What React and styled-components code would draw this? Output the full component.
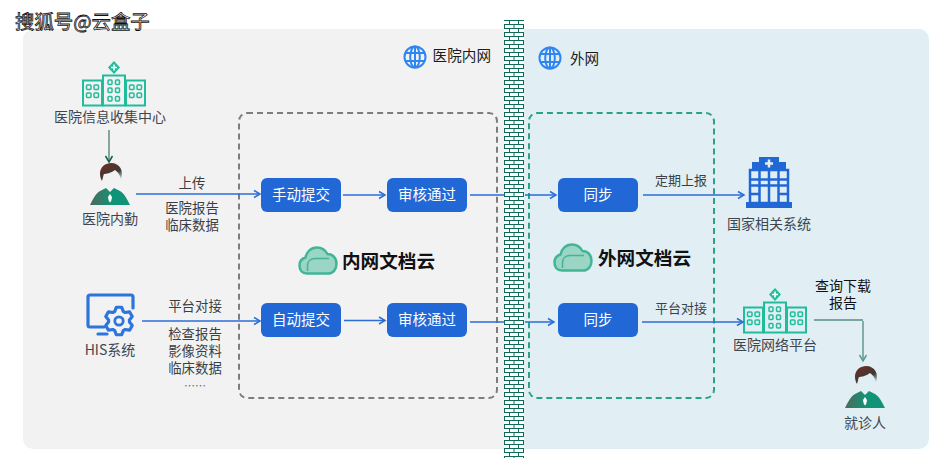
import React from "react";
import styled, { createGlobalStyle } from "styled-components";

const Global = createGlobalStyle`
  * { box-sizing: border-box; }
  html, body {
    margin: 0;
    padding: 0;
    background: #fff;
    font-family: "Noto Sans CJK SC", "Noto Sans", sans-serif;
  }
`;

const Page = styled.div`
  position: relative;
  width: 952px;
  height: 473px;
  overflow: hidden;
  padding: 29px 23px 24px;
`;

const Watermark = styled.div`
  position: absolute;
  left: 15px;
  top: 8px;
  font-size: 19.4px;
  line-height: 26px;
  color: #fff;
  -webkit-text-stroke: 0.8px #111;
  z-index: 3;
`;

const Links = styled.svg`
  position: absolute;
  inset: 0;
  width: 952px;
  height: 473px;
  pointer-events: none;
`;

const Board = styled.div`
  display: flex;
  height: 420px;
`;

const InnerZone = styled.section`
  display: flex;
  width: 481px;
  background: #f2f2f2;
  border-radius: 10px 0 0 10px;
`;

const OuterZone = styled.section`
  display: flex;
  width: 405px;
  background: #e1eff5;
  border-radius: 0 10px 10px 0;
`;

const Wall = styled.svg`
  flex: none;
  width: 20px;
  height: 438px;
  margin-top: -9px;
  z-index: 2;
`;

const Sources = styled.div`
  width: 215px;
  padding: 32px 0 0 31px;
`;

const SourceRow = styled.div`
  display: flex;
  margin-top: ${(p) => p.$top || 0}px;
`;

const NodeStack = styled.div`
  display: flex;
  flex-direction: column;
  align-items: center;
  flex: none;
  width: ${(p) => p.$w}px;
  margin-top: ${(p) => p.$top || 0}px;
  padding-bottom: ${(p) => p.$pad || 0}px;
`;

const IconNudge = styled.div`
  margin-left: ${(p) => p.$x}px;
`;

const Caption = styled.div`
  font-size: 14px;
  line-height: 17px;
  color: #3f4650;
  white-space: nowrap;
  margin-top: ${(p) => p.$top || 0}px;
`;

const Notes = styled.div`
  display: flex;
  flex-direction: column;
  align-items: center;
  width: ${(p) => p.$w}px;
  gap: ${(p) => p.$gap}px;
  padding-top: ${(p) => p.$pad || 0}px;
  align-self: ${(p) => p.$align};
`;

const Note = styled.div`
  font-size: 13.4px;
  line-height: 17px;
  color: #3a3f47;
  text-align: center;
  white-space: nowrap;
`;

const Dots = styled.span`
  color: #666;
  font-size: 11px;
`;

const MainColumn = styled.div`
  display: flex;
  flex-direction: column;
  flex: none;
  width: ${(p) => p.$w}px;
  padding-left: ${(p) => p.$inset || 0}px;
`;

const ZoneHeader = styled.header`
  display: flex;
  align-items: center;
  justify-content: ${(p) => p.$justify};
  gap: ${(p) => p.$gap}px;
  height: 24px;
  margin: ${(p) => p.$top}px 0 ${(p) => 59 - p.$top}px;
  padding: 0 13px 0 10px;
`;

const ZoneName = styled.span`
  font-size: 14.6px;
  line-height: 20px;
  color: #1c1c1c;
  padding-bottom: ${(p) => p.$pad}px;
`;

const DashBox = styled.div`
  display: flex;
  flex-direction: column;
  width: ${(p) => p.$w}px;
  height: 287px;
  padding: 64px 0 0 ${(p) => p.$pad}px;
  border: 2px dashed ${(p) => p.$color};
  border-radius: 9px;
`;

const StepRow = styled.div`
  display: flex;
  gap: ${(p) => p.$gap || 0}px;
`;

const StepButton = styled.div`
  display: flex;
  align-items: center;
  justify-content: center;
  flex: none;
  width: 80px;
  height: 34px;
  padding-bottom: 3px;
  background: #2168d6;
  border-radius: 6px;
  color: #fff;
  font-size: 14.5px;
`;

const EdgeNote = styled(Note)`
  font-size: 13px;
  margin: ${(p) => -p.$lift}px 0 0 17px;
`;

const CloudRow = styled.div`
  display: flex;
  align-items: center;
  gap: ${(p) => p.$gap}px;
  height: 29px;
  margin: ${(p) => p.$top}px 0 ${(p) => 62 - p.$top}px ${(p) => p.$shift}px;
`;

const CloudTitle = styled.span`
  font-size: 18.6px;
  line-height: 24px;
  font-weight: 700;
  color: #111;
  padding-bottom: 2px;
  white-space: nowrap;
`;

const Targets = styled.div`
  display: flex;
  flex-direction: column;
  flex: 1;
  padding-top: 128px;
`;

const LowerTargets = styled.div`
  display: flex;
  margin-top: 45px;
  padding-left: 15px;
`;

const PatientColumn = styled.div`
  display: flex;
  flex-direction: column;
  width: 90px;
  margin-left: -5px;
`;

const Query = styled.div`
  width: 56px;
  font-size: 14px;
  line-height: 17px;
  color: #111;
  text-align: center;
  white-space: nowrap;
`;

const Patient = styled(NodeStack)`
  align-self: flex-start;
  margin-left: 29px;
`;

const Icon = styled.svg`
  display: block;
  flex: none;
`;

const TEAL = "#1fbd9c";

const Hospital = () => (
  <Icon width="64" height="46" viewBox="0 0 64 46" fill="none" stroke={TEAL} strokeWidth="2">
    <path d="M32 0l6 6.500-6 6.500-6-6.500z" fill={TEAL} stroke="none" />
    <path d="M32 3.500v6M29 6.500h6" stroke="#fff" strokeWidth="1.600" />
    <rect x="1" y="19.500" width="19" height="25" />
    <rect x="44" y="19.500" width="19" height="25" />
    <rect x="21" y="14.500" width="22" height="30" />
    <g strokeWidth="1.500">
      {[4.500, 12, 47.500, 55].flatMap((bx) =>
        [24, 32].map((by) => <rect key={`${bx}-${by}`} x={bx} y={by} width="4.500" height="4.500" rx="1" />)
      )}
      {[26, 33.500].flatMap((bx) =>
        [19, 27, 35.500].map((by) => <rect key={`${bx}-${by}`} x={bx} y={by} width="4" height="4.500" rx="1" />)
      )}
    </g>
  </Icon>
);

const Person = ({ id }) => (
  <Icon width="42" height="43" viewBox="0 0 42 43">
    <defs>
      <linearGradient id={id} x1="0" y1="0" x2="0.6" y2="1">
        <stop offset="0" stopColor="#742b22" />
        <stop offset="0.7" stopColor="#3f3a34" />
        <stop offset="1" stopColor="#a9bab5" />
      </linearGradient>
      <linearGradient id={`${id}b`} x1="0" y1="0" x2="1" y2="0">
        <stop offset="0" stopColor="#4f6a5c" />
        <stop offset="0.55" stopColor="#119377" />
      </linearGradient>
    </defs>
    <path d="M13 18C9 10 11 1 22 0c9 0 13 8 10 16-1-4-3-7-6-9-4 3-9 4-11 4-1 2-1 4-2 7z" fill={`url(#${id})`} />
    <path d="M1 42c3-6 6-12 10-14l6-3 4 4 4-4 6 3c4 2 7 8 10 14z" fill={`url(#${id}b)`} />
    <path d="M21 31l2 3-.8 4-1.200 1.500L19.800 38 19 34z" fill="#fff" />
  </Icon>
);

const Globe = () => (
  <Icon width="24" height="24" viewBox="0 0 24 24" fill="none" stroke="#2f86f2" strokeWidth="2">
    <circle cx="12" cy="12" r="10.500" />
    <ellipse cx="12" cy="12" rx="4.800" ry="10.500" />
    <path d="M12 1.500v21M2.500 8h19M2.500 16h19" />
  </Icon>
);

const Cloud = () => (
  <Icon width="40" height="29" viewBox="0 0 40 29">
    <path
      d="M9 27.500C4 27.500 1.500 24 1.500 19.500 1.500 15.500 4 12.500 7.500 11.500 8.500 6 13 1.500 19 1.500c5 0 8.500 3 10.500 6.500 5 0 9 3.500 9 10 0 5.500-3.500 9.500-8.500 9.500z"
      fill="#9ad6c3"
      stroke="#42b597"
      strokeWidth="2.500"
    />
    <path d="M9.500 25v-5c0-4.500 3-7.500 7.500-7.500h14" fill="none" stroke="#42b597" strokeWidth="1.500" />
  </Icon>
);

const gearPath = (cx, cy, outer, inner, teeth = 6) => {
  const pt = (r, deg) => {
    const a = (deg * Math.PI) / 180;
    return `${(cx + r * Math.cos(a)).toFixed(2)} ${(cy + r * Math.sin(a)).toFixed(2)}`;
  };
  const pts = [];
  for (let i = 0; i < teeth; i++) {
    const a = (i * 360) / teeth - 90;
    pts.push(pt(inner, a - 24), pt(outer, a - 11), pt(outer, a + 11), pt(inner, a + 24));
  }
  return `M${pts.join("L")}z`;
};

const Desk = () => (
  <Icon width="50" height="44" viewBox="0 0 50 44" fill="none" stroke="#2c75dc" strokeLinecap="round">
    <path d="M19 34H5a2 2 0 0 1-2-2V4a2 2 0 0 1 2-2h41a2 2 0 0 1 2 2v11" strokeWidth="3.200" />
    <path d="M13 41h9" strokeWidth="3.200" />
    <path d={gearPath(34, 28, 14, 10.500)} strokeWidth="3.200" strokeLinejoin="round" />
    <circle cx="34" cy="28" r="4.200" strokeWidth="2.800" />
  </Icon>
);

const BLUE = "#2168d6";

const Tower = () => (
  <Icon width="46" height="51" viewBox="0 0 46 51" fill="none" stroke={BLUE} strokeWidth="2.500">
    <path d="M13 0h20v5h7v8H6V5h7z" fill={BLUE} stroke="none" />
    <path d="M23 2.500v8M19 6.500h8" stroke="#e1eff5" strokeWidth="2.500" />
    <rect x="4" y="13" width="38" height="33" />
    <path d="M4 22.500h38M4 28.500h38M4 37h9M33 37h9M13.500 13v33M23 13v33M32.500 13v33" />
    <path d="M0 48h46" strokeWidth="6" />
  </Icon>
);

const Link = ({ d, tip, color = "#2b6cd8", width = 1.5, dir = 0 }) => (
  <g fill="none" stroke={color} strokeWidth={width}>
    <path d={d} />
    <path d="M-6 -3.500 L0 0 L-6 3.500" strokeWidth="1.500" transform={`translate(${tip[0]} ${tip[1]}) rotate(${dir})`} />
  </g>
);

const BrickWall = () => (
  <Wall viewBox="0 0 20 438">
    <defs>
      <pattern id="bricks" width="20" height="8" patternUnits="userSpaceOnUse">
        <rect width="20" height="8" fill="#fff" />
        <path d="M0 .5h20M0 4.500h20M5.500 0v4M14.500 0v4M.5 4v4M10 4v4M19.500 4v4" stroke="#0f6a58" fill="none" />
      </pattern>
    </defs>
    <rect width="20" height="438" fill="url(#bricks)" />
  </Wall>
);

export default function App() {
  return (
    <Page>
      <Global />
      <Watermark>搜狐号@云盒子</Watermark>
      <Board>
        <InnerZone>
          <Sources>
            <SourceRow>
              <NodeStack $w={112} $pad={6}>
                <IconNudge $x={8}>
                  <Hospital />
                </IconNudge>
                <Caption $top={1}>医院信息收集中心</Caption>
                <NodeStack $w={42} $top={38}>
                  <Person id="staff" />
                </NodeStack>
                <Caption $top={4}>医院内勤</Caption>
              </NodeStack>
              <Notes $w={52} $gap={8} $align="flex-end">
                <Note>上传</Note>
                <Note>
                  医院报告
                  <br />
                  临床数据
                </Note>
              </Notes>
            </SourceRow>
            <SourceRow $top={60}>
              <NodeStack $w={112}>
                <Desk />
                <Caption $top={4}>HIS系统</Caption>
              </NodeStack>
              <Notes $w={58} $gap={11} $pad={4} $align="flex-start">
                <Note>平台对接</Note>
                <Note>
                  检查报告
                  <br />
                  影像资料
                  <br />
                  临床数据
                  <br />
                  <Dots>……</Dots>
                </Note>
              </Notes>
            </SourceRow>
          </Sources>

          <MainColumn $w={266}>
            <ZoneHeader $justify="flex-end" $gap={6} $top={16}>
              <Globe />
              <ZoneName $pad={4}>医院内网</ZoneName>
            </ZoneHeader>
            <DashBox $w={260} $pad={21} $color="#7d7d7d">
              <StepRow $gap={46}>
                <StepButton>手动提交</StepButton>
                <StepButton>审核通过</StepButton>
              </StepRow>
              <CloudRow $gap={4} $top={34} $shift={37}>
                <Cloud />
                <CloudTitle>内网文档云</CloudTitle>
              </CloudRow>
              <StepRow $gap={46}>
                <StepButton>自动提交</StepButton>
                <StepButton>审核通过</StepButton>
              </StepRow>
            </DashBox>
          </MainColumn>
        </InnerZone>

        <BrickWall />

        <OuterZone>
          <MainColumn $w={191} $inset={4}>
            <ZoneHeader $justify="flex-start" $gap={8} $top={17}>
              <Globe />
              <ZoneName $pad={0}>外网</ZoneName>
            </ZoneHeader>
            <DashBox $w={187} $pad={28} $color="#2aa288">
              <StepRow>
                <StepButton>同步</StepButton>
                <EdgeNote $lift={7}>定期上报</EdgeNote>
              </StepRow>
              <CloudRow $gap={5} $top={31} $shift={-5}>
                <Cloud />
                <CloudTitle>外网文档云</CloudTitle>
              </CloudRow>
              <StepRow>
                <StepButton>同步</StepButton>
                <EdgeNote $lift={4}>平台对接</EdgeNote>
              </StepRow>
            </DashBox>
          </MainColumn>

          <Targets>
            <NodeStack $w={108}>
              <Tower />
              <Caption $top={7}>国家相关系统</Caption>
            </NodeStack>
            <LowerTargets>
              <NodeStack $w={90} $top={11}>
                <Hospital />
                <Caption $top={2}>医院网络平台</Caption>
              </NodeStack>
              <PatientColumn>
                <Query>
                  查询下载
                  <br />
                  报告
                </Query>
                <Patient $w={42} $top={55}>
                  <Person id="patient" />
                  <Caption $top={5}>就诊人</Caption>
                </Patient>
              </PatientColumn>
            </LowerTargets>
          </Targets>
        </OuterZone>
      </Board>

      <Links viewBox="0 0 952 473">
        <Link d="M109 130V162" tip={[109, 162]} color="#135e4e" width={1} dir={90} />
        <Link d="M136 194H260" tip={[260, 194]} />
        <Link d="M343 195H385" tip={[385, 195]} />
        <Link d="M470 195H504M525 195H556" tip={[556, 195]} />
        <Link d="M643 195H744" tip={[744, 195]} />
        <Link d="M142 321H260" tip={[260, 321]} />
        <Link d="M344 320.500H385" tip={[385, 320.5]} />
        <Link d="M470 322H504M525 322H554" tip={[554, 322]} />
        <Link d="M642 322H743" tip={[743, 322]} />
        <path d="M814 320H863" fill="none" stroke="#135e4e" strokeWidth="1.200" />
        <Link d="M863 321V361" tip={[863, 361]} color="#5f9a91" width={1.5} dir={90} />
      </Links>
    </Page>
  );
}
